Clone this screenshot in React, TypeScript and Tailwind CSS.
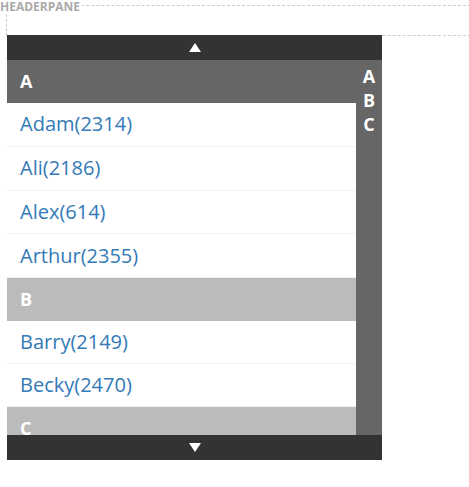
import React from 'react';

type Row =
  | { kind: 'header'; label: string; shade: 'dark' | 'light' }
  | { kind: 'item'; label: string; tall?: boolean };

const rows: Row[] = [
  { kind: 'header', label: 'A', shade: 'dark' },
  { kind: 'item', label: 'Adam(2314)', tall: true },
  { kind: 'item', label: 'Ali(2186)', tall: true },
  { kind: 'item', label: 'Alex(614)', tall: true },
  { kind: 'item', label: 'Arthur(2355)', tall: true },
  { kind: 'header', label: 'B', shade: 'light' },
  { kind: 'item', label: 'Barry(2149)' },
  { kind: 'item', label: 'Becky(2470)' },
  { kind: 'header', label: 'C', shade: 'light' },
];

const App: React.FC = () => {
  return (
    <div className="w-[469px] h-[487px] overflow-hidden bg-white pt-[5px] font-['Open_Sans',sans-serif]">
      {/* Header pane placeholder */}
      <div className="relative ml-[6px] w-[480px] h-[31px] border border-dashed border-[#cccccc]">
        <span className="absolute left-[-7px] top-[-6px] bg-white pr-[2px] text-[12px] font-bold leading-[14px] text-[#aaaaaa]">
          HEADERPANE
        </span>
      </div>

      {/* Indexed list widget */}
      <div className="relative ml-[7px] -mt-px w-[375px]">
        <div className="h-[25px] bg-[#333333] flex items-center justify-center">
          <div className="w-0 h-0 border-l-[6px] border-r-[6px] border-b-[9px] border-l-transparent border-r-transparent border-b-white" />
        </div>

        <div className="flex h-[375px]">
          <div className="w-[349px] overflow-hidden">
            {rows.map((r, i) =>
              r.kind === 'header' ? (
                <div
                  key={i}
                  className={`h-[43px] flex items-center px-[13px] text-[18px] font-bold text-white ${
                    r.shade === 'dark' ? 'bg-[#666666]' : 'bg-[#bbbbbb]'
                  }`}
                >
                  {r.label}
                </div>
              ) : (
                <div
                  key={i}
                  className={`${r.tall ? 'h-[43.75px]' : 'h-[43px]'} flex items-center px-[13px] text-[20px] text-[#337ab7] bg-white border-b border-[#f0f0f0]`}
                >
                  {r.label}
                </div>
              )
            )}
          </div>
          <div className="w-[26px] bg-[#666666] pt-[4px] flex flex-col items-center text-[18px] font-bold leading-[24px] text-white">
            <span>A</span>
            <span>B</span>
            <span>C</span>
          </div>
        </div>

        <div className="h-[25px] bg-[#333333] flex items-center justify-center">
          <div className="w-0 h-0 border-l-[6px] border-r-[6px] border-t-[9px] border-l-transparent border-r-transparent border-t-white" />
        </div>
      </div>
    </div>
  );
};

export default App;
